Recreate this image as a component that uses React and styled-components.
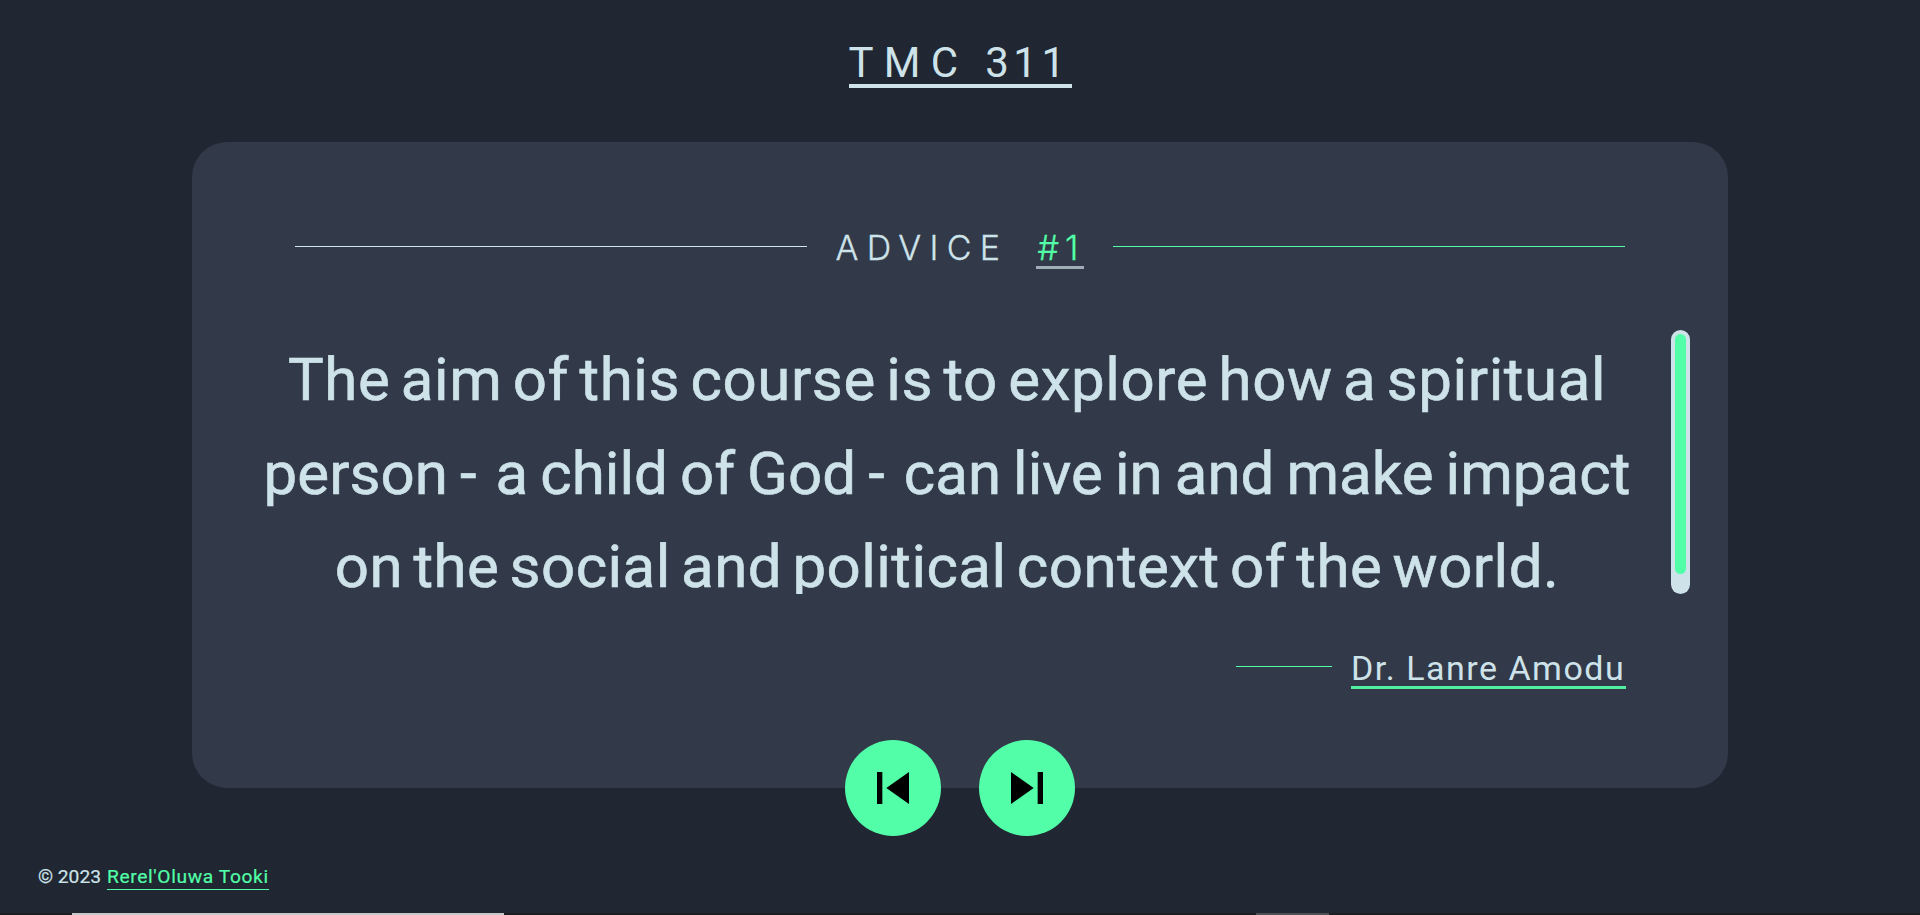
import React from 'react';
import styled, { createGlobalStyle, ThemeProvider } from 'styled-components';
import { MdSkipNext, MdSkipPrevious } from 'react-icons/md';

const theme = {
  night: '#202632',
  card: '#323949',
  cyan: '#cee3e9',
  green: '#52ffa8',
};

const GlobalStyle = createGlobalStyle`
  *, *::before, *::after { box-sizing: border-box; }
  body {
    margin: 0;
    overflow: hidden;
    background: ${theme.night};
    color: ${theme.cyan};
    font-family: Roboto, "Liberation Sans", sans-serif;
  }
`;

const Page = styled.div`
  display: flex;
  flex-direction: column;
  height: 915px;
  padding-top: 42px;
`;

const Title = styled.h1`
  align-self: center;
  width: 223px;
  margin: 0 0 54px;
  padding-bottom: 1px;
  border-bottom: 4px solid ${({ theme }) => theme.cyan};
  font-size: 42px;
  font-weight: 400;
  line-height: 41px;
  letter-spacing: 10.3px;
  word-spacing: -4px;
  white-space: nowrap;
`;

const CourseNumber = styled.span`
  letter-spacing: 4.5px;
`;

const Card = styled.main`
  display: flex;
  flex-direction: column;
  width: 80%;
  height: 646px;
  margin: 0 auto;
  padding: 87px 38px 0 33px;
  border-radius: 35px;
  background: ${({ theme }) => theme.card};
`;

const Heading = styled.div`
  display: flex;
  justify-content: space-between;
  height: 40px;
  padding: 0 65px 0 70px;
`;

const Rule = styled.span`
  width: ${({ $width }) => $width}px;
  height: 1px;
  margin-top: ${({ $drop }) => $drop}px;
  background: ${({ theme, $tone }) => theme[$tone]};
`;

const HeadingText = styled.h2`
  display: flex;
  justify-content: space-between;
  width: 248px;
  margin: 0 1px 0 0;
  font-family: Inter, "Liberation Sans", sans-serif;
  font-size: 34px;
  font-weight: 300;
  line-height: 37px;
  letter-spacing: 8.3px;
  -webkit-text-stroke: 0.3px currentColor;
`;

const AdviceNumber = styled.span`
  width: 48px;
  padding-left: 2px;
  border-bottom: 3px solid #a1aeb8;
  color: ${({ theme }) => theme.green};
  letter-spacing: 6px;
  white-space: nowrap;
`;

const QuoteArea = styled.section`
  display: flex;
  height: 264px;
  margin-top: 61px;
  overflow: hidden;
`;

const Quote = styled.p`
  flex: 1;
  margin: 0;
  padding-top: 3px;
  font-size: 60px;
  line-height: 93.6px;
  text-align: center;
  -webkit-text-stroke: 0.6px currentColor;
`;

const QuoteLine = styled.span`
  display: block;
  margin-left: -2px;
  letter-spacing: ${({ $tracking }) => $tracking}px;
  word-spacing: ${({ $gap }) => $gap}px;
  white-space: nowrap;
`;

const Dash = styled.span`
  margin-right: 7px;
`;

const ScrollTrack = styled.div`
  width: 19px;
  height: 264px;
  padding: 4px;
  border-radius: 10px;
  background: ${({ theme }) => theme.cyan};
`;

const ScrollThumb = styled.div`
  height: 240px;
  border-radius: 6px;
  background: ${({ theme }) => theme.green};
`;

const Attribution = styled.div`
  display: flex;
  justify-content: flex-end;
  gap: 19px;
  margin-top: 58px;
  padding-right: 64px;
`;

const Author = styled.span`
  width: 275px;
  padding-bottom: 1px;
  border-bottom: 3px solid #50efa0;
  font-size: 34px;
  line-height: 33px;
  letter-spacing: 1.5px;
  white-space: nowrap;
`;

const Controls = styled.nav`
  display: flex;
  justify-content: center;
  gap: 38px;
  margin-top: -48px;
`;

const RoundButton = styled.button`
  display: grid;
  place-items: center;
  width: 96px;
  height: 96px;
  padding: 0;
  border: 0;
  border-radius: 50%;
  background: ${({ theme }) => theme.green};
  color: #000;
  font-size: 64px;
`;

const Footer = styled.footer`
  display: flex;
  align-items: flex-start;
  margin-top: 28px;
  padding-left: 38px;
  font-size: 19.2px;
  line-height: 25px;
  -webkit-text-stroke: 0.2px currentColor;
`;

const Copyright = styled.span`
  width: 69px;
`;

const FooterLink = styled.a`
  width: 162px;
  border-bottom: 1px solid ${({ theme }) => theme.green};
  color: ${({ theme }) => theme.green};
  letter-spacing: 0.63px;
  white-space: nowrap;
`;

const BottomStrip = styled.div`
  display: flex;
  height: 2px;
  margin-top: auto;
  padding-left: 72px;
  gap: 752px;
  background: #1e1d1f;
`;

const StripSegment = styled.span`
  width: ${({ $width }) => $width}px;
  background: ${({ $color }) => $color};
`;

export default function App() {
  return (
    <ThemeProvider theme={theme}>
      <GlobalStyle />
      <Page>
        <Title>
          TMC <CourseNumber>311</CourseNumber>
        </Title>
        <Card>
          <Heading>
            <Rule $width={512} $drop={17} $tone="cyan" />
            <HeadingText>
              <span>ADVICE</span>
              <AdviceNumber>#1</AdviceNumber>
            </HeadingText>
            <Rule $width={512} $drop={17} $tone="green" />
          </Heading>
          <QuoteArea>
            <Quote>
              <QuoteLine $tracking={0.58} $gap={-5}>
                The aim of this course is to explore how a spiritual
              </QuoteLine>
              <QuoteLine $tracking={0.06} $gap={-3}>
                person <Dash>-</Dash> a child of God <Dash>-</Dash> can live in and make impact
              </QuoteLine>
              <QuoteLine $tracking={0.46} $gap={-5}>
                on the social and political context of the world.
              </QuoteLine>
            </Quote>
            <ScrollTrack>
              <ScrollThumb />
            </ScrollTrack>
          </QuoteArea>
          <Attribution>
            <Rule $width={96} $drop={14} $tone="green" />
            <Author>Dr. Lanre Amodu</Author>
          </Attribution>
        </Card>
        <Controls>
          <RoundButton aria-label="Previous">
            <MdSkipPrevious />
          </RoundButton>
          <RoundButton aria-label="Next">
            <MdSkipNext />
          </RoundButton>
        </Controls>
        <Footer>
          <Copyright>© 2023</Copyright>
          <FooterLink>Rerel'Oluwa Tooki</FooterLink>
        </Footer>
        <BottomStrip>
          <StripSegment $width={432} $color="#c8c8c8" />
          <StripSegment $width={73} $color="#4f4e50" />
        </BottomStrip>
      </Page>
    </ThemeProvider>
  );
}
